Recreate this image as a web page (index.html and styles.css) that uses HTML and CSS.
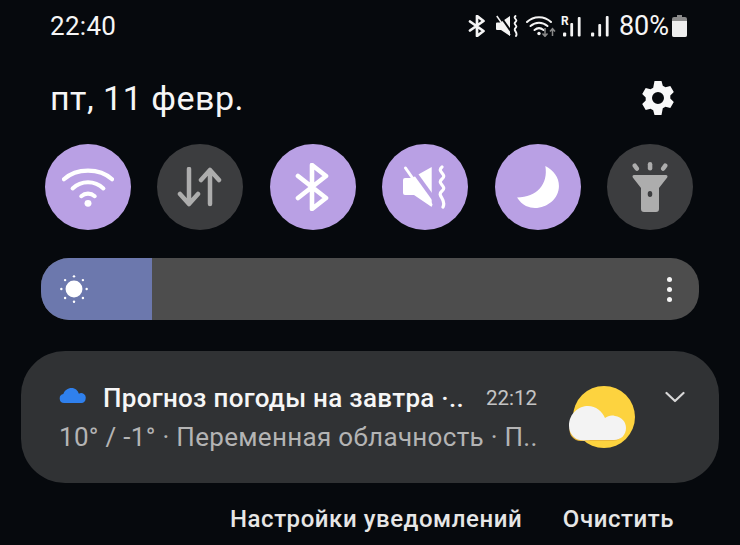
FILE: index.html
```html
<!DOCTYPE html>
<html lang="ru">
<head>
<meta charset="utf-8">
<title>Шторка уведомлений</title>
<link rel="stylesheet" href="styles.css">
</head>
<body>
<main class="shade">
  <header class="status">
    <span class="time">22:40</span>
    <div class="status-icons">
      <svg class="s-bt" viewBox="0 0 18 22"><path d="M2 6.500 15.500 16 9 21V1l6.500 5L2 15.500" fill="none" stroke="#f4f4f4" stroke-width="2.700" stroke-linejoin="round" stroke-linecap="round"/></svg>
      <svg class="s-mute" viewBox="0 0 22 22"><path d="M0 8.500a1 1 0 0 1 1-1h3.500L14 1v20L5 15H1a1 1 0 0 1-1-1z" fill="#f4f4f4"/><path d="M3.500 0 16.500 18.500" stroke="#06090d" stroke-width="2"/><path d="M.8 1 14 20" stroke="#f4f4f4" stroke-width="1.500"/><path d="M19.500 1c-3 2.500 3 3.500 0 6s3 3.500 0 6 3 4 .5 8" fill="none" stroke="#f4f4f4" stroke-width="1.900" stroke-linecap="round"/></svg>
      <svg class="s-wifi" viewBox="0 0 30 22"><g fill="none" stroke="#f4f4f4" stroke-width="2" stroke-linecap="round"><path d="M1 7C7.500 .5 18.500 .5 25 7"/><path d="M4.500 11c5-4.500 12-4.500 17 0"/><path d="M8.500 15c3-2.500 6-2.500 9 0"/></g><circle cx="13" cy="18.500" r="1.700" fill="#f4f4f4"/><path d="M19 13v8m-2.500-2.500 2.500 2.800 2.500-2.800" fill="none" stroke="#8a8a8a" stroke-width="1.500"/><path d="M26.500 21v-7m-2.500 2.500 2.500-2.800 2.500 2.800" fill="none" stroke="#8a8a8a" stroke-width="1.500"/></svg>
      <span class="signal-r"><span class="roam">R</span><svg class="s-sig" viewBox="0 0 18 22"><g fill="#f4f4f4"><rect x="0" y="17.500" width="3.200" height="4" rx="1"/><rect x="7.300" y="8" width="2.800" height="13.500" rx="1"/><rect x="14.800" y="2" width="2.800" height="19.500" rx="1"/></g></svg></span>
      <svg class="s-sig s-sig2" viewBox="0 0 18 22"><g fill="#f4f4f4"><rect x="0" y="17.500" width="3.200" height="4" rx="1"/><rect x="7.300" y="9" width="2.800" height="12.500" rx="1"/><rect x="14.800" y="1" width="2.800" height="20.500" rx="1"/></g></svg>
      <span class="battery-text">80%</span>
      <svg class="s-bat" viewBox="0 0 15 22"><path d="M5 0h5v2h3a2 2 0 0 1 2 2v16a2 2 0 0 1-2 2H2a2 2 0 0 1-2-2V4a2 2 0 0 1 2-2h3z" fill="#8b8b8b"/><path d="M0 6h15v14a2 2 0 0 1-2 2H2a2 2 0 0 1-2-2z" fill="#eeeeee"/></svg>
    </div>
  </header>

  <section class="date-row">
    <span class="date">пт, 11 февр.</span>
    <svg class="gear" viewBox="0 0 34 36"><path fill-rule="evenodd" fill="#f8f8f8" d="M13.500 1h7l1.300 4.800 2.700 1.500 4.800-1.300 3.500 6-3.500 3.500v3.100l3.500 3.500-3.500 6-4.800-1.300-2.700 1.500L20.500 35h-7l-1.300-4.700-2.700-1.500-4.800 1.300-3.500-6L4.700 20.600v-3.100L1.200 14l3.500-6 4.800 1.300 2.700-1.500zM17 12a6 6 0 1 0 0 12 6 6 0 0 0 0-12z"/></svg>
  </section>

  <section class="toggles">
    <div class="toggle on">
      <svg viewBox="0 0 54 42"><g fill="none" stroke="#fff" stroke-width="4.200" stroke-linecap="round"><path d="M2 13C15 1 39 1 52 13"/><path d="M11 22.500C20 14 34 14 43 22.500"/><path d="M20 30.500c4-3.500 10-3.500 14 0"/></g><circle cx="27" cy="38" r="3.600" fill="#fff"/></svg>
    </div>
    <div class="toggle off">
      <svg viewBox="0 0 46 40"><g fill="none" stroke="#adadad" stroke-width="4.500" stroke-linecap="round" stroke-linejoin="round"><path d="M12 2v35M3 27l9 10 9-10"/><path d="M33 37V3M24 13l9-10 9 10"/></g></svg>
    </div>
    <div class="toggle on">
      <svg viewBox="0 0 36 48"><path d="M3 13 31 35 17 46V2L31 13 3 35" fill="none" stroke="#fff" stroke-width="4.600" stroke-linejoin="round" stroke-linecap="round"/></svg>
    </div>
    <div class="toggle on">
      <svg viewBox="0 0 44 44"><path d="M0 15a2 2 0 0 1 2-2h7L28.700 2v40L11 30H2a2 2 0 0 1-2-2z" fill="#fff"/><path d="M7 1 33 37" stroke="#b9a0e4" stroke-width="4"/><path d="M2.500 3 28 39.500" stroke="#fff" stroke-width="3" stroke-linecap="round"/><path d="M39 2c-6 5 6 7 0 12s6 7 0 12 5 8 1 16" fill="none" stroke="#fff" stroke-width="3.200" stroke-linecap="round"/></svg>
    </div>
    <div class="toggle on">
      <svg viewBox="0 0 42 42"><path d="M28 1C31 18 20 31 1 31c5 8 12 10 17 10C30 41 41 32 41 20 41 12 36 5 28 1z" fill="#fff"/></svg>
    </div>
    <div class="toggle off">
      <svg viewBox="0 0 36 50"><g fill="#adadad"><rect x="1.500" y="1" width="4.500" height="8" rx="2.250" transform="rotate(-35 4 5)"/><rect x="15.800" y="0" width="4.500" height="8.500" rx="2.250"/><rect x="30" y="1" width="4.500" height="8" rx="2.250" transform="rotate(35 32 5)"/><path fill-rule="evenodd" d="M2 13h32a1.500 1.500 0 0 1 1.200 2.400L27 26v21a3 3 0 0 1-3 3H12a3 3 0 0 1-3-3V26L.8 15.400A1.500 1.500 0 0 1 2 13zM18 29a2.300 3 0 1 0 0 6 2.300 3 0 0 0 0-6z"/></g></svg>
    </div>
  </section>

  <section class="slider">
    <div class="slider-fill">
      <svg class="sun" viewBox="0 0 32 32"><circle cx="16" cy="16" r="9" fill="#fff"/><g fill="#fff"><circle cx="16" cy="2.500" r="1.300"/><circle cx="16" cy="29.500" r="1.300"/><circle cx="2.500" cy="16" r="1.300"/><circle cx="29.500" cy="16" r="1.300"/><circle cx="6.500" cy="6.500" r="1.300"/><circle cx="25.500" cy="6.500" r="1.300"/><circle cx="6.500" cy="25.500" r="1.300"/><circle cx="25.500" cy="25.500" r="1.300"/></g></svg>
    </div>
    <div class="slider-dots"><i></i><i></i><i></i></div>
  </section>

  <article class="card">
    <div class="card-text">
      <div class="card-head">
        <svg class="cloud-blue" viewBox="0 0 28 16"><path d="M5 16a4.800 4.800 0 0 1-.8-9.500C5.500 2.500 9 0 13 0c4 0 6.500 2.500 7.800 6A5 5 0 0 1 28 11.500c0 2.500-2 4.500-4.500 4.500z" fill="#2f80ed"/></svg>
        <span class="card-title">Прогноз погоды на завтра ·..</span>
        <span class="card-time">22:12</span>
      </div>
      <div class="card-body">10° / -1° · Переменная облачность · П..</div>
    </div>
    <svg class="weather" viewBox="0 0 66 64"><circle cx="35" cy="31" r="31" fill="#fdd33f"/><path d="M12 55a11 11 0 0 1-11-14c1-8 7-15 17-15 8 0 13 4 16 11 3-3 6-4 10-3 6 1 11 6 10 12-1 6-5 9-10 9z" fill="#eab83a"/><path d="M11 54C5 53 0 47 0 40 0 27 10 20 19 20c8 0 14 5 17 12 3-2 6-3 10-2 7 1 11 6 11 12 0 7-5 12-12 12H24c-5 0-9 1-13 0z" fill="#f3f3f3"/></svg>
    <svg class="chevron" viewBox="0 0 20 12"><path d="M1.500 2 10 10l8.500-8" fill="none" stroke="#d8d8d8" stroke-width="2.200" stroke-linecap="round" stroke-linejoin="round"/></svg>
  </article>

  <footer class="actions">
    <span>Настройки уведомлений</span>
    <span>Очистить</span>
  </footer>
</main>
</body>
</html>
```
FILE: styles.css
```css
* { box-sizing: border-box; }

html, body {
  margin: 0;
  height: 100%;
  overflow: hidden;
  background: #06090d;
}

.shade {
  width: 740px;
  height: 545px;
  overflow: hidden;
  background: #06090d;
  color: #f6f6f6;
  font-family: Roboto, "Noto Sans", sans-serif;
}

.status {
  height: 52px;
  padding: 0 53px 0 50px;
  display: flex;
  align-items: center;
  justify-content: space-between;
}

.time {
  font-size: 26px;
  letter-spacing: 0.3px;
  line-height: 52px;
}

.status-icons {
  display: flex;
  align-items: center;
}

.s-bt { width: 18px; height: 22px; margin-right: 10px; }
.s-mute { width: 22px; height: 22px; margin-right: 8px; }
.s-wifi { width: 30px; height: 22px; margin-right: 7px; }

.signal-r {
  display: flex;
  align-items: flex-start;
  margin-right: 10px;
}

.roam {
  font-size: 12px;
  font-weight: 700;
  line-height: 12px;
  width: 0;
  margin-left: -2px;
  margin-right: 2px;
}

.s-sig { width: 18px; height: 22px; }
.s-sig2 { margin-right: 10px; }

.battery-text {
  font-size: 27px;
  line-height: 30px;
}

.s-bat { width: 15px; height: 22px; margin-left: 3px; }

.date-row {
  height: 92px;
  padding: 0 65px 0 50px;
  display: flex;
  align-items: center;
  justify-content: space-between;
}

.date {
  font-size: 34px;
  line-height: 92px;
  letter-spacing: 0.5px;
}

.gear { width: 34px; height: 36px; }

.toggles {
  padding: 0 47px 0 45px;
  height: 86px;
  display: flex;
  justify-content: space-between;
}

.toggle {
  width: 86px;
  height: 86px;
  border-radius: 50%;
  display: flex;
  align-items: center;
  justify-content: center;
}

.toggle.on { background: #b9a0e4; }
.toggle.off { background: #3c3d3f; }
.toggle svg { height: 44px; width: 44px; }
.toggle:nth-child(1) svg { width: 52px; height: 42px; }
.toggle:nth-child(2) svg { width: 46px; height: 40px; }
.toggle:nth-child(3) svg { width: 36px; height: 48px; }
.toggle:nth-child(6) svg { width: 36px; height: 50px; }

.slider {
  margin: 28px 41px 0;
  height: 62px;
  border-radius: 28px;
  background: #4d4d4d;
  display: flex;
  justify-content: space-between;
  align-items: center;
  overflow: hidden;
}

.slider-fill {
  width: 111px;
  height: 62px;
  background: #6c78ad;
  padding-left: 18px;
  display: flex;
  align-items: center;
}

.sun { width: 30px; height: 30px; }

.slider-dots {
  display: flex;
  flex-direction: column;
  gap: 5px;
  margin-right: 27px;
}

.slider-dots i {
  display: block;
  width: 5px;
  height: 5px;
  border-radius: 50%;
  background: #f4f4f4;
}

.card {
  margin: 31px 21px 0;
  height: 132px;
  border-radius: 44px;
  background: #303234;
  padding: 32px 0 0 38px;
  display: flex;
  align-items: flex-start;
}

.card-text { width: 478px; }

.card-head {
  display: flex;
  align-items: center;
  height: 30px;
}

.cloud-blue { width: 27px; height: 15px; margin-right: 17px; margin-top: -6px; }

.card-title {
  font-size: 26px;
  letter-spacing: 0.3px;
  font-weight: 500;
  line-height: 30px;
  white-space: nowrap;
  flex: 1;
}

.card-time {
  font-size: 20.5px;
  color: #c4c4c4;
  line-height: 30px;
}

.card-body {
  margin-top: 9px;
  font-size: 26px;
  letter-spacing: 0.3px;
  line-height: 30px;
  color: #b4b4b4;
  white-space: nowrap;
}

.weather {
  width: 66px;
  height: 64px;
  margin: 3px 0 0 32px;
  flex: none;
}

.chevron {
  width: 20px;
  height: 12px;
  margin: 8px 0 0 30px;
  flex: none;
}

.actions {
  padding: 0 66px 0 230px;
  margin-top: 22px;
  display: flex;
  justify-content: space-between;
  font-size: 24px;
  letter-spacing: 0.55px;
  line-height: 28px;
  font-weight: 500;
  color: #e6e6e6;
}
```
